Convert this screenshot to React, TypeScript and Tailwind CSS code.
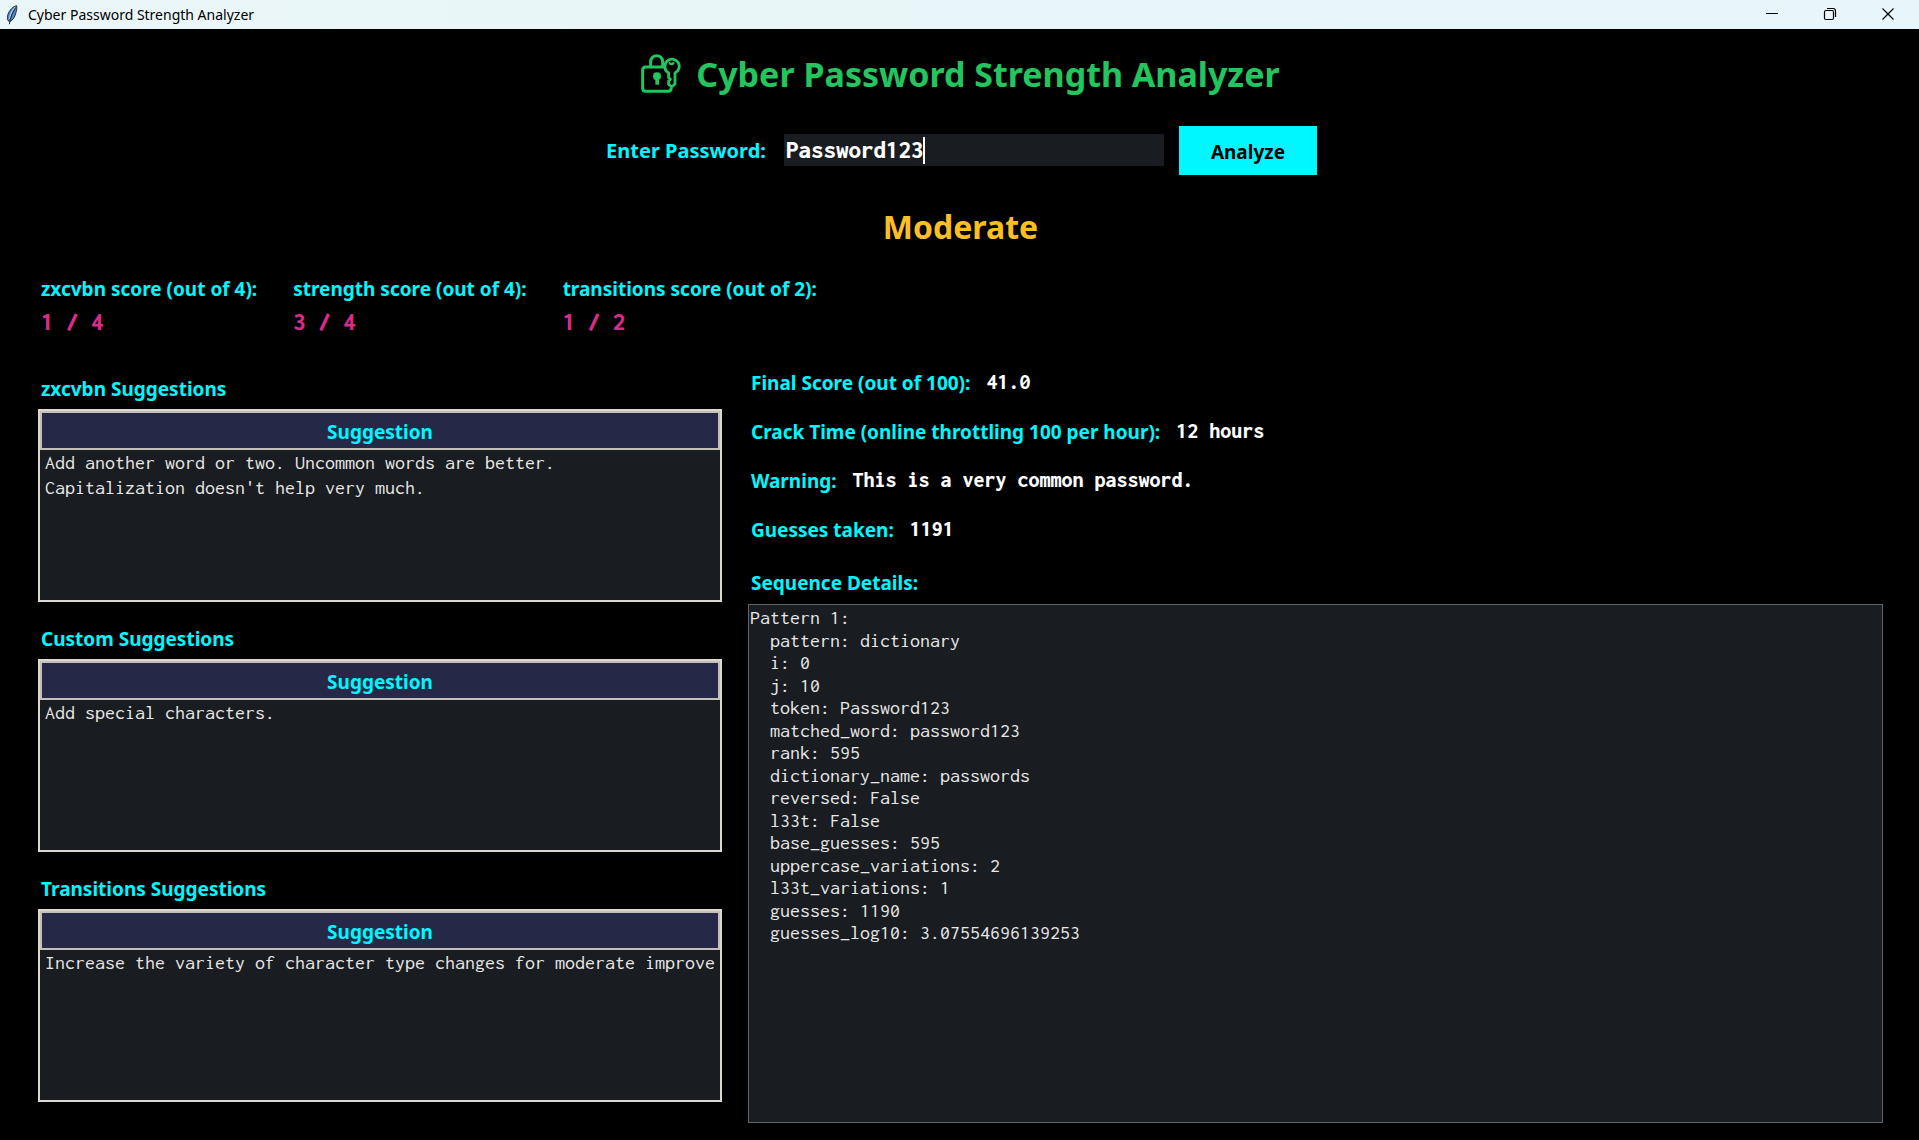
import { useState } from "react";

const MONO = "font-['Inconsolata','Noto_Sans_Mono','Liberation_Mono',monospace]";

const scores = [
  { label: "zxcvbn score (out of 4):", value: "1 / 4" },
  { label: "strength score (out of 4):", value: "3 / 4" },
  { label: "transitions score (out of 2):", value: "1 / 2" },
];

const suggestionGroups = [
  {
    title: "zxcvbn Suggestions",
    rows: [
      "Add another word or two. Uncommon words are better.",
      "Capitalization doesn't help very much.",
    ],
  },
  { title: "Custom Suggestions", rows: ["Add special characters."] },
  {
    title: "Transitions Suggestions",
    rows: ["Increase the variety of character type changes for moderate improve"],
  },
];

const results = [
  { label: "Final Score (out of 100):", value: "41.0" },
  { label: "Crack Time (online throttling 100 per hour):", value: "12 hours" },
  { label: "Warning:", value: "This is a very common password." },
  { label: "Guesses taken:", value: "1191" },
];

const sequence = `Pattern 1:
  pattern: dictionary
  i: 0
  j: 10
  token: Password123
  matched_word: password123
  rank: 595
  dictionary_name: passwords
  reversed: False
  l33t: False
  base_guesses: 595
  uppercase_variations: 2
  l33t_variations: 1
  guesses: 1190
  guesses_log10: 3.07554696139253`;

function FeatherIcon() {
  return (
    <svg className="h-5 w-3" viewBox="0 0 12 20" aria-hidden="true">
      <path d="M10.5 0.6C7.2 1.6 3.6 4.6 2 9.2C1.2 11.6 1.2 14 2 15.6L3.6 16.6C7.2 15.2 9 11.4 9.8 8.2C10.4 5.8 11.4 2.6 10.5 0.6Z" fill="#4a86c8" stroke="#2a3340" strokeWidth="1" />
      <path d="M9.6 2C6.8 4.4 4.4 9 3.4 14" fill="none" stroke="#a8cdf0" strokeWidth="1.4" />
      <path d="M9.8 2.4C7 6.4 4.2 12 3.4 19.2" fill="none" stroke="#1b222c" strokeWidth="1" />
    </svg>
  );
}

function LockKeyIcon() {
  return (
    <svg className="h-[42px] w-10" viewBox="0 0 120 126" fill="none" stroke="currentColor" strokeWidth="9" aria-hidden="true">
      <path d="M72 42H14Q5 42 5 51V106Q5 115 14 115H81Q90 115 91 105" />
      <path d="M29 42V26A18 18 0 0 1 65 26V42" />
      <circle cx="48" cy="70" r="12" fill="currentColor" stroke="none" />
      <path d="M43 72H54V95H43Z" fill="currentColor" stroke="none" />
      <path d="M83 60C69 53 68 32 80 23C90 15 106 18 112 29C118 41 113 55 102 60V93L92 102L83 94V84L88 79L83 74Z" strokeWidth="8.5" strokeLinejoin="round" />
      <path d="M86 31Q91 35 97 31" strokeWidth="7" strokeLinecap="round" />
    </svg>
  );
}

function TitleBar() {
  return (
    <header className="flex h-[29px] items-center bg-linear-to-r from-[#eaf6f7] to-[#e8f5fa] text-black">
      <div className="flex flex-1 items-center gap-[10px] pl-[6px]">
        <FeatherIcon />
        <span className="text-sm leading-5">Cyber Password Strength Analyzer</span>
      </div>
      <div className="flex self-stretch pr-[2px] pb-px">
        <button aria-label="Minimize" className="flex w-[58px] items-center justify-center">
          <svg className="size-[14px]" viewBox="0 0 14 14" stroke="currentColor" aria-hidden="true">
            <path d="M1 6.500H13" />
          </svg>
        </button>
        <button aria-label="Restore" className="flex w-[58px] items-center justify-center">
          <svg className="size-[14px]" viewBox="0 0 14 14" fill="none" stroke="currentColor" strokeWidth="1.200" aria-hidden="true">
            <rect x="1.500" y="3.500" width="9" height="9" rx="1.500" />
            <path d="M4 1.500H10Q12.500 1.500 12.500 4V10" />
          </svg>
        </button>
        <button aria-label="Close" className="flex w-[58px] items-center justify-center">
          <svg className="size-[14px]" viewBox="0 0 14 14" fill="none" stroke="currentColor" strokeWidth="1.200" aria-hidden="true">
            <path d="M1.500 1.500L12.500 12.500M12.500 1.500L1.500 12.500" />
          </svg>
        </button>
      </div>
    </header>
  );
}

function SuggestionTable({ title, rows }: { title: string; rows: string[] }) {
  return (
    <section>
      <h2 className="mb-[7px] pl-[3px] text-[19px] leading-[26px] font-bold text-[#00f7ff]">{title}</h2>
      <div className="h-[193px] overflow-hidden border-2 border-[#dcd8d0] bg-[#191c20]">
        <table aria-label={title} className="w-full table-fixed border-separate border-spacing-0">
          <thead>
            <tr>
              <th className="h-[39px] border-2 border-[#c4c0b8] bg-[#252847] p-0 pt-[2px] text-center text-[19px] leading-[26px] font-bold text-[#00f7ff]">
                Suggestion
              </th>
            </tr>
          </thead>
          <tbody className={`${MONO} text-xl leading-[25px] text-[#e8e8e8]`}>
            {rows.map((row) => (
              <tr key={row}>
                <td className="overflow-hidden p-0 pl-[5px] whitespace-nowrap">{row}</td>
              </tr>
            ))}
          </tbody>
        </table>
      </div>
    </section>
  );
}

export default function App() {
  const [password, setPassword] = useState("Password123");

  return (
    <div className="flex min-h-screen flex-col bg-black font-['Noto_Sans','Open_Sans',sans-serif] text-[#00f7ff]">
      <TitleBar />
      <main className="flex flex-1 flex-col pt-[21px] pr-9 pb-[17px] pl-[38px]">
        <h1 className="flex items-center justify-center gap-[15px] text-[34px] leading-[48px] font-bold text-[#22c55e]">
          <LockKeyIcon />
          Cyber Password Strength Analyzer
        </h1>

        <form className="mt-7 flex items-center justify-center pl-[2px]" onSubmit={(e) => e.preventDefault()}>
          <label htmlFor="password" className="text-xl leading-[26px] font-bold">
            Enter Password:
          </label>
          <div className="relative mb-px ml-[18px] w-[380px]">
            <input
              id="password"
              type="text"
              value={password}
              onChange={(e) => setPassword(e.target.value)}
              className={`${MONO} block h-8 w-full bg-[#191c20] px-[2px] text-[25px] leading-8 font-extrabold text-white caret-transparent outline-none`}
            />
            <span className="absolute top-[3px] left-[139px] h-[27px] w-[2px] bg-white" />
          </div>
          <button type="submit" className="ml-[15px] h-[49px] w-[138px] bg-[#00f7ff] pt-[2px] text-[19px] leading-[26px] font-bold text-black">
            Analyze
          </button>
        </form>

        <p className="mt-[30px] text-center text-[32px] leading-[44px] font-bold text-[#fbbf24]">Moderate</p>

        <dl className="mt-[27px] flex gap-9 pl-[3px]">
          {scores.map((s) => (
            <div key={s.label} className="flex flex-col gap-1">
              <dt className="text-[19px] leading-[26px] font-bold">{s.label}</dt>
              <dd className={`${MONO} text-[25px] leading-8 font-extrabold text-[#db2b8a]`}>{s.value}</dd>
            </div>
          ))}
        </dl>

        <div className="mt-8 grid flex-1 grid-cols-[minmax(0,684px)_minmax(0,1fr)] gap-[26px]">
          <div className="flex flex-col gap-6 pt-[6px]">
            {suggestionGroups.map((g) => (
              <SuggestionTable key={g.title} title={g.title} rows={g.rows} />
            ))}
          </div>

          <div className="flex flex-col">
            <dl className="flex flex-col gap-[23px] pl-[3px]">
              {results.map((r) => (
                <div key={r.label} className="flex items-center gap-4">
                  <dt className="text-[19px] leading-[26px] font-bold">{r.label}</dt>
                  <dd className={`${MONO} pb-[2px] text-[22px] leading-6 font-extrabold text-white`}>{r.value}</dd>
                </div>
              ))}
            </dl>
            <label htmlFor="sequence" className="mt-[27px] mb-2 pl-[3px] text-[19px] leading-[26px] font-bold">
              Sequence Details:
            </label>
            <textarea
              id="sequence"
              readOnly
              value={sequence}
              className={`${MONO} w-full flex-1 resize-none border border-[#62666a] bg-[#191c20] px-px py-[2px] text-xl leading-[1.125] text-[#e8e8e8] outline-none`}
            />
          </div>
        </div>
      </main>
    </div>
  );
}
